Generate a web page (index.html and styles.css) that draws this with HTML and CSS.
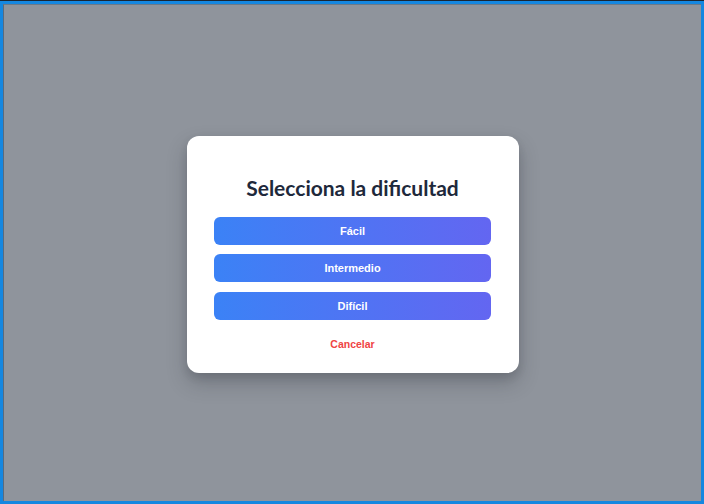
FILE: index.html
```html
<!DOCTYPE html>
<html lang="es">
<head>
<meta charset="utf-8">
<link rel="stylesheet" href="styles.css">
</head>
<body>
<div class="frame">
  <div class="overlay">
    <div class="modal">
      <h2 class="title">Selecciona la dificultad</h2>
      <div class="options">
        <button class="opt">Fácil</button>
        <button class="opt">Intermedio</button>
        <button class="opt">Difícil</button>
      </div>
      <button class="cancel">Cancelar</button>
    </div>
  </div>
</div>
</body>
</html>
```
FILE: styles.css
```css
html, body {
  margin: 0;
  padding: 0;
  width: 704px;
  height: 504px;
  overflow: hidden;
}
.frame {
  box-sizing: border-box;
  width: 704px;
  height: 504px;
  border-top: 1px solid #1a2633;
  background: #1587e0;
  padding: 3px 3px 3px 3px;
}
.overlay {
  box-sizing: border-box;
  width: 100%;
  height: 100%;
  background: #8f949c;
  border-left: 1px solid #5a6b7d;
  border-top: 1px solid #6b7a8a;
  display: flex;
  align-items: center;
  justify-content: center;
}
.modal {
  box-sizing: border-box;
  width: 332px;
  height: 237px;
  background: #ffffff;
  border-radius: 12px;
  box-shadow: 0 10px 20px rgba(30, 35, 45, 0.25), 0 4px 8px rgba(30, 35, 45, 0.12);
  padding: 38px 27.5px 0;
  display: flex;
  flex-direction: column;
  align-items: stretch;
  margin-top: 2px;
}
.title {
  margin: 0;
  text-align: center;
  font-family: Lato, "Noto Sans", sans-serif;
  font-weight: 700;
  font-size: 21px;
  line-height: 28px;
  color: #1e293b;
}
.options {
  display: flex;
  flex-direction: column;
  gap: 9.5px;
  margin-top: 15px;
}
.opt {
  height: 28px;
  border: none;
  border-radius: 6px;
  background: linear-gradient(to right, #3b82f6, #6366f1);
  color: #ffffff;
  font-family: "Liberation Sans", Arial, sans-serif;
  font-weight: 700;
  font-size: 11px;
  padding: 0;
}
.cancel {
  align-self: center;
  margin-top: 17px;
  background: none;
  border: none;
  padding: 0;
  color: #ef4444;
  font-family: "Liberation Sans", Arial, sans-serif;
  font-weight: 700;
  font-size: 10.5px;
  line-height: 14px;
}
```
